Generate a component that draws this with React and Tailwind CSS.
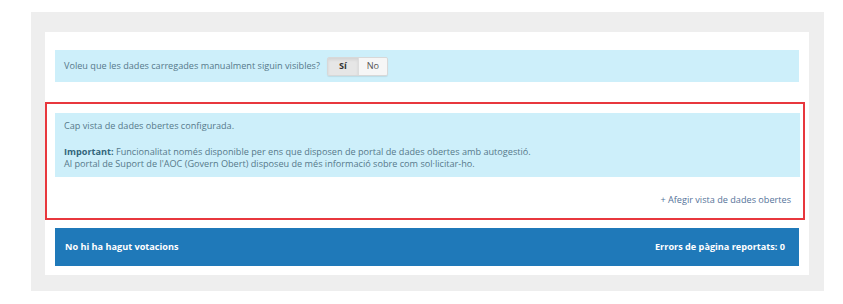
export default function App() {
  return (
    <div className="w-[843px] h-[304px] bg-white pt-3 pl-[31px] font-['Open_Sans',sans-serif] text-[9.15px]">
      <div className="w-[793px] bg-[#eeeeee] pt-5 pb-4 pl-[14px] pr-[15px]">
        <div className="bg-white pt-[18px] pb-[9px]">
          <div className="mx-[10px] h-8 bg-[#cdeffa] flex items-center pl-[9px] text-[#56798a]">
            <span>Voleu que les dades carregades manualment siguin visibles?</span>
            <div className="ml-[7px] flex h-[19px] rounded-[2px] border border-[#d8d8d8] shadow-[0_1px_1px_rgba(0,0,0,0.08)] overflow-hidden">
              <span className="w-[30px] flex items-center justify-center bg-[#e6e6e6] font-bold text-[#333] shadow-[inset_0_2px_3px_rgba(0,0,0,0.08)]">Sí</span>
              <span className="w-[29px] flex items-center justify-center bg-[#f6f6f6] text-[#555] border-l border-[#dddddd]">No</span>
            </div>
          </div>
          <div className="mt-5 mr-1 border-2 border-[#e8373d] pt-[9px] pb-[11px]">
            <div className="ml-2 mr-[3px] bg-[#cdeffa] text-[#56798a] pl-[9px] pt-[7px] pb-[7px] leading-[12px]">
              <p>Cap vista de dades obertes configurada.</p>
              <p className="mt-[14px]"><b className="text-[#32657a]">Important:</b> Funcionalitat només disponible per ens que disposen de portal de dades obertes amb autogestió.</p>
              <p>Al portal de Suport de l'AOC (Govern Obert) disposeu de més informació sobre com sol·licitar-ho.</p>
            </div>
            <div className="flex justify-end pr-3 pt-4 text-[#55739a]">
              <span>+ Afegir vista de dades obertes</span>
            </div>
          </div>
          <div className="mx-[10px] mt-2 h-[38px] bg-[#1f79b9] flex items-center justify-between pl-[10px] pr-[14px] text-white font-bold">
            <span>No hi ha hagut votacions</span>
            <span>Errors de pàgina reportats: 0</span>
          </div>
        </div>
      </div>
    </div>
  );
}
